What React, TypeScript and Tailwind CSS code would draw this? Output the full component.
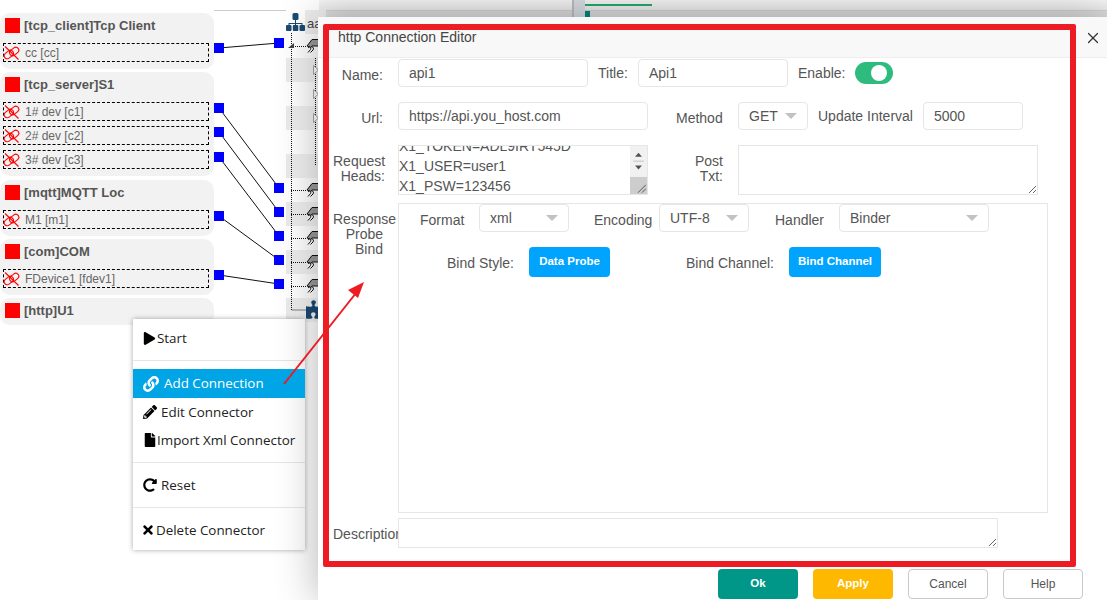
import React from 'react';
import { FaPuzzlePiece, FaPlay, FaLink, FaPencilAlt, FaFile, FaRedoAlt, FaTimes } from 'react-icons/fa';
import { X } from 'lucide-react';

const groups = [
    { title: '[tcp_client]Tcp Client', rows: ['cc [cc]'] },
    { title: '[tcp_server]S1', rows: ['1# dev [c1]', '2# dev [c2]', '3# dev [c3]'] },
    { title: '[mqtt]MQTT Loc', rows: ['M1 [m1]'] },
    { title: '[com]COM', rows: ['FDevice1 [fdev1]'] },
    { title: '[http]U1', rows: [] as string[] },
];

// left port y -> right port y
const links = [
    [48, 43],
    [108, 188],
    [132, 212],
    [157, 236],
    [216, 260],
    [275, 284],
];

function BrokenLink() {
    return (
        <svg width="17" height="16" viewBox="0 0 17 16" fill="none" stroke="#f00" strokeWidth="1.1" className="shrink-0 -ml-[1px]">
            <rect x="0.8" y="6.5" width="10" height="6" rx="3" transform="rotate(-38 5.8 9.5)" />
            <rect x="6.2" y="3.5" width="10" height="6" rx="3" transform="rotate(-38 11.2 6.5)" />
            <path d="M2 1.500 15.500 14.500" />
        </svg>
    );
}

function PlugIcon() {
    return (
        <svg width="20" height="16" viewBox="0 0 20 16" className="shrink-0">
            <path d="M1 8 6 1.500h14V8H6l-1 1.500z" fill="#9a9a9a" stroke="#111" strokeWidth="1" />
            <path d="M2 9.500c2-1 3.500 0 2.500 2L2 14.500M5.500 9c2 0 2.500 1.500 1.500 3l-2.500 2.500" fill="#fff" stroke="#111" strokeWidth="1" />
        </svg>
    );
}

function SitemapIcon() {
    return (
        <svg width="19" height="18" viewBox="0 0 19 18" fill="#1b4a72" className="absolute left-[286px] top-[13px]">
            <rect x="6.500" y="0" width="6" height="7" rx="1.500" />
            <path d="M9 7h1v3h6.500v2h-1v-1H10v1H9v-1H3.500v1h-1v-2H9z" />
            <rect x="0" y="12" width="5.500" height="6" rx="1" />
            <rect x="6.800" y="12" width="5.500" height="6" rx="1" />
            <rect x="13.500" y="12" width="5.500" height="6" rx="1" />
        </svg>
    );
}

function Caret() {
    return (
        <svg width="12" height="6" viewBox="0 0 12 6" className="shrink-0">
            <path d="M0 0h12L6 6z" fill="#c2c2c2" />
        </svg>
    );
}

function Select({ value, width }: { value: string; width: string }) {
    return (
        <div className={`${width} h-[28px] flex items-center justify-between pl-[10px] pr-[10px] border border-[#e6e6e6] rounded-sm bg-white text-[14px] text-[#555]`}>
            <span>{value}</span>
            <Caret />
        </div>
    );
}

function Field({ value, width }: { value: string; width: string }) {
    return (
        <div className={`${width} h-[28px] flex items-center px-[10px] border border-[#e6e6e6] rounded-sm bg-white text-[14px] text-[#555]`}>
            {value}
        </div>
    );
}

function MenuRow({ icon, label, gap }: { icon: React.ReactNode; label: string; gap: string }) {
    return (
        <div className="h-[28px] flex items-center pl-[10px] text-[#222]">
            {icon}
            <span className={gap}>{label}</span>
        </div>
    );
}

function DiagramTree() {
    const rows = [0, 1, 2, 3, 4, 5, 6, 7, 8, 9, 10, 11, 12];
    return (
        <div className="absolute left-[286px] top-[10px] w-[40px] flex flex-col">
            {rows.map((r) => (
                <div key={r} className={`h-[24px] ${r % 2 === 0 ? (r > 0 ? 'bg-gradient-to-r from-[#ebebeb] to-[#f8f8f8]' : 'ml-[19px] bg-[#eee]') : ''}`} />
            ))}
        </div>
    );
}

export default function App() {
    return (
        <div className="relative w-[1107px] h-[600px] overflow-hidden bg-white font-['Liberation_Sans',Arial,sans-serif]">
            {/* top of the page behind the dialog */}
            <div className="absolute left-[214px] top-[10px] w-[72px] h-px bg-[#ccc]" />
            <div className="absolute left-[319px] right-0 top-0 h-[17px] flex flex-col">
                <div className="h-[10px] bg-gradient-to-b from-[#f6f6f6] to-[#ececec]" />
                <div className="h-[7px] bg-[#dcdcdc] border-t border-[#d0d0d0]" />
            </div>
            <div className="absolute left-[572px] top-0 w-[13px] h-[17px] bg-[#d8dde3] border-l-2 border-[#bdbdbd]" />
            <div className="absolute left-[585px] top-[4px] w-[67px] h-[2px] bg-[#26a96c]" />
            <div className="absolute left-[585px] top-[11px] w-[5px] h-[6px] bg-[#00897b]" />

            {/* connector list */}
            <div className="w-[214px] pt-[13px] flex flex-col gap-[3px]">
                {groups.map((g) => (
                    <div key={g.title} className={`bg-[#f2f2f2] rounded-[10px] ${g.rows.length ? 'pb-[7px]' : 'h-[27px]'} ${g.rows.length > 1 ? 'mb-px' : ''}`}>
                        <div className="h-[30px] flex items-start pt-[5px] pl-[5px] gap-[4px]">
                            <div className="w-[15px] h-[15px] bg-[#f00]" />
                            <span className="text-[13px] leading-[15px] font-bold text-[#555]">{g.title}</span>
                        </div>
                        <div className="flex flex-col gap-[5px]">
                            {g.rows.map((r) => (
                                <div key={r} className="ml-[3px] w-[206px] h-[19px] flex items-center gap-[5px] border border-dashed border-black text-[12px] text-[#666]">
                                    <BrokenLink />
                                    <span>{r}</span>
                                </div>
                            ))}
                        </div>
                    </div>
                ))}
            </div>

            {/* diagram */}
            <DiagramTree />
            <SitemapIcon />
            <span className="absolute left-[307px] top-[14px] text-[13px] text-[#444]">aa</span>
            <svg className="absolute left-0 top-0" width="330" height="340">
                {links.map(([a, b]) => (
                    <line key={a} x1="219" y1={a} x2="279" y2={b} stroke="#111" strokeWidth="1" />
                ))}
                <path d="M291.500 33V310H306" fill="none" stroke="#111" strokeDasharray="1 1" />
                <path d="M315.500 58V165" fill="none" stroke="#111" strokeDasharray="1 1" />
                {[46, 190, 214, 238, 262, 286].map((y) => (
                    <path key={y} d={`M291 ${y + 0.5}H306`} stroke="#111" strokeDasharray="1 1" />
                ))}
                <path d="M288 48l6-5v5z" fill="#444" />
                {[70, 94, 118].map((y) => (
                    <path key={y} d={`M313.500 ${y - 4.5}l5 4.500-5 4.500z`} fill="#fff" stroke="#aaa" />
                ))}
                {links.map(([a, b]) => (
                    <g key={a}>
                        <rect x="214" y={a - 5} width="10" height="10" fill="#00f" />
                        <rect x="274" y={b - 5} width="10" height="10" fill="#00f" />
                    </g>
                ))}
            </svg>
            {[38, 182, 206, 230, 254, 278].map((y) => (
                <div key={y} className="absolute left-[306px]" style={{ top: y }}>
                    <PlugIcon />
                </div>
            ))}
            <FaPuzzlePiece className="absolute left-[306px] top-[299px] text-[#1b4a72]" size={21} />

            {/* context menu */}
            <div className="absolute left-[133px] top-[319px] w-[172px] h-[231px] bg-white shadow-[0_0_5px_rgba(0,0,0,0.35)] font-['Open_Sans',sans-serif] text-[13.4px]">
                <div className="h-[38px] flex items-center pl-[10px] text-[#222]">
                    <FaPlay size={13} className="text-black" />
                    <span className="ml-[1px]">Start</span>
                </div>
                <div className="mt-[3px] h-px bg-[#e6e6e6]" />
                <div className="relative z-30 mt-[8px] h-[29px] flex items-center pl-[10px] bg-[#00a5e6] text-white">
                    <FaLink size={16} />
                    <span className="ml-[5px]">Add Connection</span>
                </div>
                <MenuRow icon={<FaPencilAlt size={14} className="text-black" />} label="Edit Connector" gap="ml-[4px]" />
                <MenuRow icon={<FaFile size={14} className="text-black" />} label="Import Xml Connector" gap="ml-0" />
                <div className="mt-[8px] h-px bg-[#e6e6e6]" />
                <div className="mt-[8px]">
                    <MenuRow icon={<FaRedoAlt size={14} className="text-black" />} label="Reset" gap="ml-[4px]" />
                </div>
                <div className="mt-[8px] h-px bg-[#e6e6e6]" />
                <div className="mt-[8px]">
                    <MenuRow icon={<FaTimes size={14} className="text-black -ml-[2px]" />} label="Delete Connector" gap="ml-[1px]" />
                </div>
            </div>

            {/* dialog */}
            <div className="absolute z-20 left-[318px] top-[17px] w-[789px] h-[583px] flex flex-col bg-white shadow-[0_0_40px_rgba(0,0,0,0.3)] text-[14px] text-[#555]">
                <div className="h-[41px] shrink-0 flex items-center justify-between pl-[20px] pr-[5px] bg-[#f8f8f8] border-b border-[#eee]">
                    <span className="text-[14px] text-[#444]">http Connection Editor</span>
                    <X size={18} strokeWidth={1.6} className="text-[#333] mt-[2px]" />
                </div>

                <div className="flex mt-[1px] pl-[15px] items-center">
                    <div className="w-[65px] pr-[15px] pt-[4px] text-right">Name:</div>
                    <Field value="api1" width="w-[190px]" />
                    <div className="w-[50px] pl-[10px]">Title:</div>
                    <Field value="Api1" width="w-[150px]" />
                    <div className="w-[67px] pl-[10px]">Enable:</div>
                    <div className="w-[38px] h-[22px] flex items-center justify-end pr-[6px] rounded-full bg-[#2ebc7e]">
                        <div className="w-[16px] h-[16px] rounded-full bg-white" />
                    </div>
                </div>

                <div className="flex mt-[15px] pl-[15px] items-center">
                    <div className="w-[65px] pr-[15px] pt-[4px] text-right">Url:</div>
                    <Field value="https://api.you_host.com" width="w-[250px]" />
                    <div className="w-[90px] pl-[28px] pt-[4px]">Method</div>
                    <Select value="GET" width="w-[70px]" />
                    <div className="w-[115px] pl-[10px] whitespace-nowrap">Update Interval</div>
                    <Field value="5000" width="w-[100px]" />
                </div>

                <div className="flex mt-[15px] pl-[15px] h-[50px]">
                    <div className="w-[65px] pr-[13px] pt-[9px] text-right leading-[15px]">Request Heads:</div>
                    <div className="relative w-[250px] h-[50px] border border-[#e6e6e6] overflow-hidden text-[14px] leading-[20px] text-[#555]">
                        <div className="-mt-[10px]">
                            <div>X1_TOKEN=ADL9IRT545D</div>
                            <div>X1_USER=user1</div>
                            <div>X1_PSW=123456</div>
                        </div>
                        <div className="absolute right-0 top-0 bottom-0 w-[17px] flex flex-col items-center bg-[#f1f1f1]">
                            <svg width="17" height="32" viewBox="0 0 17 32">
                                <path d="M5 11l3.500-4 3.500 4z" fill="#505050" />
                                <path d="M3 15.500h11" stroke="#c1c1c1" />
                                <path d="M5 20l3.500 4 3.500-4z" fill="#505050" />
                            </svg>
                            <svg width="17" height="17" viewBox="0 0 17 17" className="bg-[#cdcdcd]">
                                <path d="M8 16 16 8M12 16l4-4" stroke="#555" strokeWidth="1" />
                            </svg>
                        </div>
                    </div>
                    <div className="w-[90px] pr-[15px] pt-[9px] text-right leading-[15px]">Post<br />Txt:</div>
                    <textarea className="w-[300px] h-[50px] border border-[#e6e6e6] outline-none" />
                </div>

                <div className="flex mt-[8px] pl-[15px] h-[310px]">
                    <div className="w-[65px] pr-[15px] pt-[9px] text-right leading-[15px] whitespace-nowrap">
                        <div className="-mr-[13px]">Response</div>
                        <div>Probe</div>
                        <div>Bind</div>
                    </div>
                    <div className="w-[650px] h-[310px] border border-[#e6e6e6]">
                        <div className="flex items-center pl-[21px]">
                            <div className="w-[59px] pt-[4px]">Format</div>
                            <Select value="xml" width="w-[90px]" />
                            <div className="w-[90px] pl-[25px] pt-[4px]">Encoding</div>
                            <Select value="UTF-8" width="w-[90px]" />
                            <div className="w-[90px] pl-[26px] pt-[4px]">Handler</div>
                            <Select value="Binder" width="w-[150px]" />
                        </div>
                        <div className="flex items-center mt-[15px] pl-[48px]">
                            <div className="w-[82px] pt-[3px]">Bind Style:</div>
                            <div className="w-[81px] h-[30px] flex items-center justify-center rounded-sm bg-[#00a4ff] text-white text-[11.5px] font-bold">Data Probe</div>
                            <div className="w-[179px] pl-[76px] pt-[3px] whitespace-nowrap">Bind Channel:</div>
                            <div className="w-[92px] h-[30px] flex items-center justify-center rounded-sm bg-[#00a4ff] text-white text-[11.5px] font-bold">Bind Channel</div>
                        </div>
                    </div>
                </div>

                <div className="flex mt-[5px] pl-[15px] h-[30px] items-center">
                    <div className="w-[65px] pt-[2px] overflow-hidden whitespace-nowrap">Description</div>
                    <textarea className="w-[600px] h-[30px] border border-[#e6e6e6] outline-none" />
                </div>

                <div className="flex justify-end gap-[15px] mt-[21px] pr-[24px] text-[12px]">
                    <div className="w-[80px] h-[30px] flex items-center justify-center rounded-sm bg-[#009688] text-white font-bold text-[11.5px]">Ok</div>
                    <div className="w-[80px] h-[30px] flex items-center justify-center rounded-sm bg-[#ffb800] text-white font-bold text-[11.5px]">Apply</div>
                    <div className="w-[80px] h-[30px] flex items-center justify-center rounded-sm border border-[#c9c9c9] bg-white text-[#555]">Cancel</div>
                    <div className="w-[80px] h-[30px] flex items-center justify-center rounded-sm border border-[#c9c9c9] bg-white text-[#555]">Help</div>
                </div>
            </div>

            {/* red annotation over the screenshot */}
            <div className="absolute z-30 left-[323px] top-[24px] w-[753px] h-[543px] border-[6px] border-[#ed1c24] rounded-[2px] pointer-events-none" />
            <svg className="absolute z-40 left-[270px] top-[270px] pointer-events-none" width="110" height="130">
                <path d="M14 114 90 18" stroke="#ed1c24" strokeWidth="2" fill="none" />
                <path d="M94 12 88 28 78 20z" fill="#ed1c24" />
            </svg>
        </div>
    );
}
